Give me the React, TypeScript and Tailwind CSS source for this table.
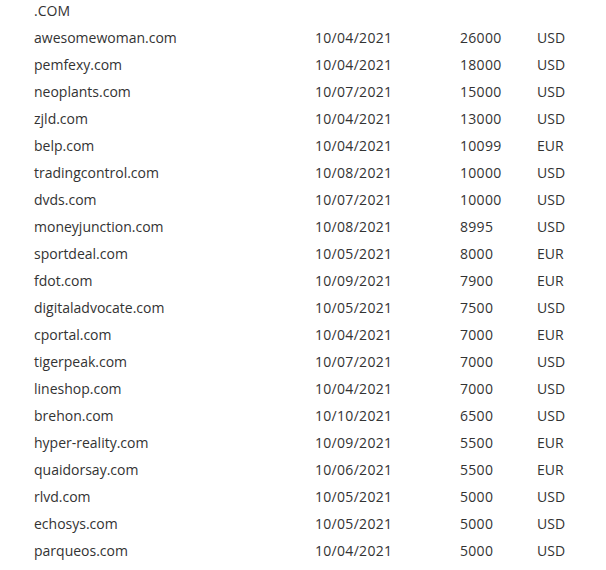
const rows: [string, string, string, string][] = [
  ['awesomewoman.com', '10/04/2021', '26000', 'USD'],
  ['pemfexy.com', '10/04/2021', '18000', 'USD'],
  ['neoplants.com', '10/07/2021', '15000', 'USD'],
  ['zjld.com', '10/04/2021', '13000', 'USD'],
  ['belp.com', '10/04/2021', '10099', 'EUR'],
  ['tradingcontrol.com', '10/08/2021', '10000', 'USD'],
  ['dvds.com', '10/07/2021', '10000', 'USD'],
  ['moneyjunction.com', '10/08/2021', '8995', 'USD'],
  ['sportdeal.com', '10/05/2021', '8000', 'EUR'],
  ['fdot.com', '10/09/2021', '7900', 'EUR'],
  ['digitaladvocate.com', '10/05/2021', '7500', 'USD'],
  ['cportal.com', '10/04/2021', '7000', 'EUR'],
  ['tigerpeak.com', '10/07/2021', '7000', 'USD'],
  ['lineshop.com', '10/04/2021', '7000', 'USD'],
  ['brehon.com', '10/10/2021', '6500', 'USD'],
  ['hyper-reality.com', '10/09/2021', '5500', 'EUR'],
  ['quaidorsay.com', '10/06/2021', '5500', 'EUR'],
  ['rlvd.com', '10/05/2021', '5000', 'USD'],
  ['echosys.com', '10/05/2021', '5000', 'USD'],
  ['parqueos.com', '10/04/2021', '5000', 'USD'],
];

export default function App() {
  return (
    <div className="min-h-screen bg-white pl-[34px] text-[14px] text-[#333] font-['Open_Sans',sans-serif]">
      <table className="border-collapse">
        <thead>
          <tr className="h-[24px]">
            <th className="w-[281px] p-0 text-left font-normal leading-[22px] align-top">.COM</th>
            <th className="w-[145px] p-0" />
            <th className="w-[77px] p-0" />
            <th className="p-0" />
          </tr>
        </thead>
        <tbody>
          {rows.map(([domain, date, price, cur]) => (
            <tr key={domain} className="h-[27px]">
              <td className="p-0">{domain}</td>
              <td className="p-0 tracking-[0.3px]">{date}</td>
              <td className="p-0 tracking-[0.3px]">{price}</td>
              <td className="p-0">{cur}</td>
            </tr>
          ))}
        </tbody>
      </table>
    </div>
  );
}
